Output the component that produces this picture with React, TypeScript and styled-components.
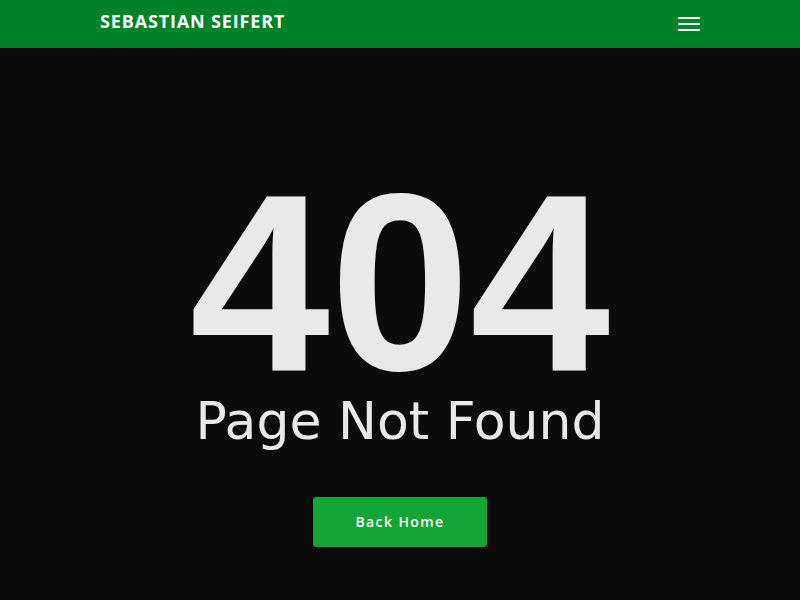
import React from "react";
import styled, { createGlobalStyle } from "styled-components";

const Global = createGlobalStyle`
  html, body { margin: 0; padding: 0; background: #0b0b0b; }
  body { font-family: "Open Sans", "Liberation Sans", sans-serif; }
`;

const Page = styled.div`
  min-height: 600px;
  background: #0b0b0b;
  display: flex;
  flex-direction: column;
`;

const Header = styled.header`
  height: 48px;
  background: #008326;
  display: flex;
  align-items: center;
  justify-content: space-between;
  padding: 0 100px;
`;

const Brand = styled.a`
  font-family: "Open Sans", sans-serif;
  font-weight: 700;
  font-size: 18px;
  color: #ffffff;
  text-transform: uppercase;
  letter-spacing: 0.85px;
  text-decoration: none;
  margin-top: -6px;
`;

const MenuButton = styled.button`
  width: 22px;
  height: 14px;
  padding: 0;
  border: 0;
  background: transparent;
  display: flex;
  flex-direction: column;
  justify-content: space-between;
  cursor: pointer;
`;

const MenuLine = styled.span`
  display: block;
  height: 2px;
  width: 100%;
  background: #ffffff;
`;

const Main = styled.main`
  flex: 1;
  display: flex;
  flex-direction: column;
  align-items: center;
  padding-top: 124px;
`;

const Code = styled.h1`
  margin: 0;
  font-family: "Liberation Sans", Arial, sans-serif;
  font-weight: 700;
  font-size: 252px;
  line-height: 0.88;
  color: #e9e9e9;
`;

const Subtitle = styled.h2`
  margin: 1px 0 0;
  font-family: "DejaVu Sans", sans-serif;
  font-weight: 400;
  font-size: 52px;
  line-height: 1;
  color: #e9e9e9;
`;

const HomeButton = styled.a`
  margin-top: 50px;
  width: 174px;
  height: 50px;
  display: flex;
  align-items: center;
  justify-content: center;
  background: #13a535;
  border-radius: 3px;
  color: #ffffff;
  font-family: "Open Sans", sans-serif;
  font-weight: 600;
  font-size: 14px;
  letter-spacing: 1.4px;
  text-decoration: none;
`;

export default function App() {
  return (
    <>
      <Global />
      <Page>
        <Header>
          <Brand href="#">Sebastian Seifert</Brand>
          <MenuButton aria-label="Menu">
            <MenuLine />
            <MenuLine />
            <MenuLine />
          </MenuButton>
        </Header>
        <Main>
          <Code>404</Code>
          <Subtitle>Page Not Found</Subtitle>
          <HomeButton href="#">Back Home</HomeButton>
        </Main>
      </Page>
    </>
  );
}
